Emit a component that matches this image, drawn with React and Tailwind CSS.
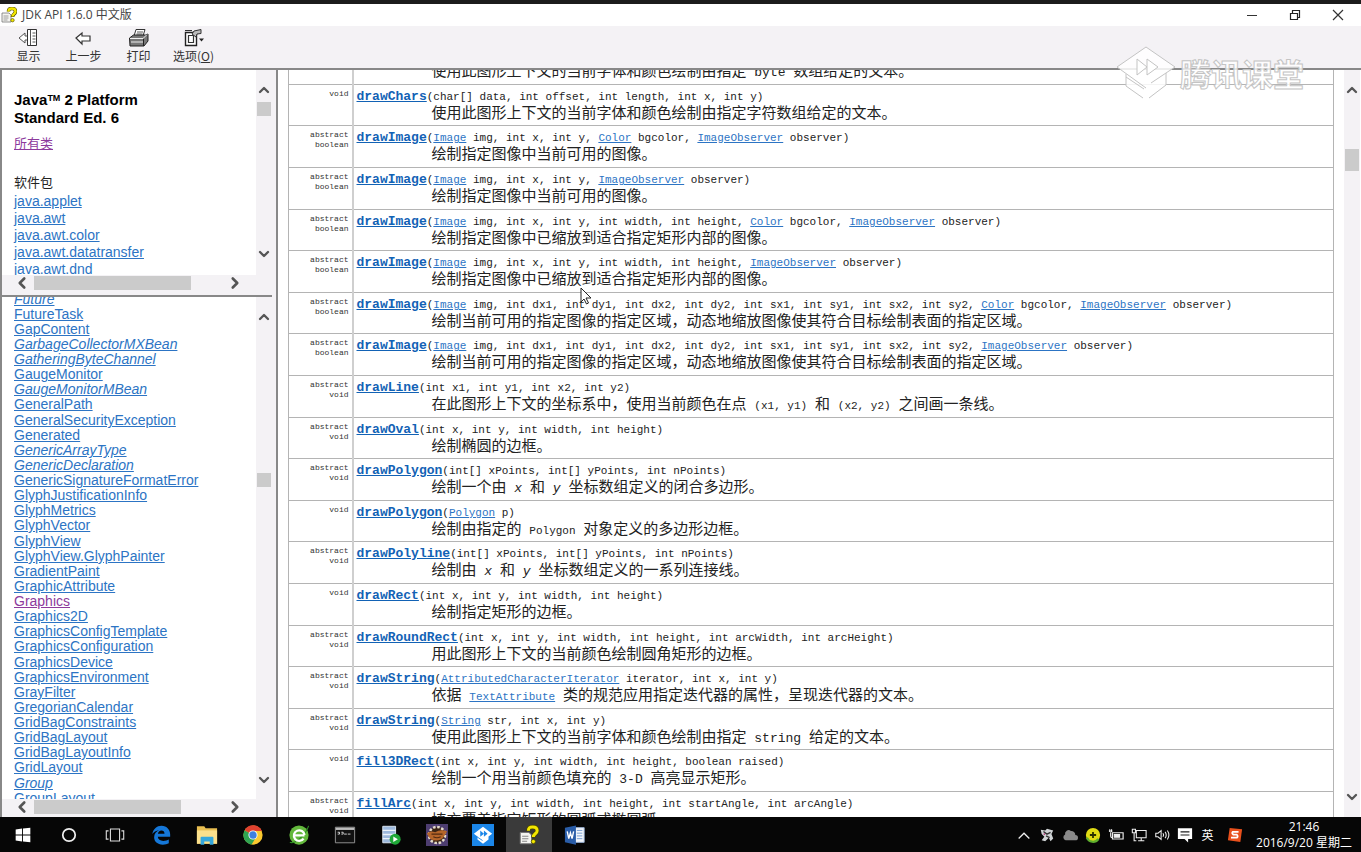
import { Fragment } from "react";
import { ChevronDown, ChevronLeft, ChevronRight, ChevronUp } from "lucide-react";

const packages = ["java.applet", "java.awt", "java.awt.color", "java.awt.datatransfer", "java.awt.dnd"];

// a leading "*" marks an interface, which is listed in italics
const classes = [
  "*Future", "FutureTask", "GapContent", "*GarbageCollectorMXBean", "*GatheringByteChannel", "GaugeMonitor",
  "*GaugeMonitorMBean", "GeneralPath", "GeneralSecurityException", "Generated", "*GenericArrayType",
  "*GenericDeclaration", "GenericSignatureFormatError", "GlyphJustificationInfo", "GlyphMetrics", "GlyphVector",
  "GlyphView", "GlyphView.GlyphPainter", "GradientPaint", "GraphicAttribute", "Graphics", "Graphics2D",
  "GraphicsConfigTemplate", "GraphicsConfiguration", "GraphicsDevice", "GraphicsEnvironment", "GrayFilter",
  "GregorianCalendar", "GridBagConstraints", "GridBagLayout", "GridBagLayoutInfo", "GridLayout", "*Group",
  "GroupLayout",
];

const Mono = ({ children }) => <span className="font-['Liberation_Mono',monospace] text-[13px]">{children}</span>;
const Code = ({ children }) => <code className="font-['Liberation_Mono',monospace] text-[11px]">{children}</code>;
const Link = ({ children }) => (
  <a href="#" className="text-[#2c74c4] underline">
    {children}
  </a>
);

// {Name} inside args becomes a link
const methods = [
  { type: ["abstract", "void"], name: "drawBytes", args: "(byte[] data, int offset, int length, int x, int y)", desc: <>使用此图形上下文的当前字体和颜色绘制由指定<Mono> byte </Mono>数组给定的文本。</> },
  { type: ["void"], name: "drawChars", args: "(char[] data, int offset, int length, int x, int y)", desc: "使用此图形上下文的当前字体和颜色绘制由指定字符数组给定的文本。" },
  { type: ["abstract", "boolean"], name: "drawImage", args: "({Image} img, int x, int y, {Color} bgcolor, {ImageObserver} observer)", desc: "绘制指定图像中当前可用的图像。" },
  { type: ["abstract", "boolean"], name: "drawImage", args: "({Image} img, int x, int y, {ImageObserver} observer)", desc: "绘制指定图像中当前可用的图像。" },
  { type: ["abstract", "boolean"], name: "drawImage", args: "({Image} img, int x, int y, int width, int height, {Color} bgcolor, {ImageObserver} observer)", desc: "绘制指定图像中已缩放到适合指定矩形内部的图像。" },
  { type: ["abstract", "boolean"], name: "drawImage", args: "({Image} img, int x, int y, int width, int height, {ImageObserver} observer)", desc: "绘制指定图像中已缩放到适合指定矩形内部的图像。" },
  { type: ["abstract", "boolean"], name: "drawImage", args: "({Image} img, int dx1, int dy1, int dx2, int dy2, int sx1, int sy1, int sx2, int sy2, {Color} bgcolor, {ImageObserver} observer)", desc: "绘制当前可用的指定图像的指定区域，动态地缩放图像使其符合目标绘制表面的指定区域。" },
  { type: ["abstract", "boolean"], name: "drawImage", args: "({Image} img, int dx1, int dy1, int dx2, int dy2, int sx1, int sy1, int sx2, int sy2, {ImageObserver} observer)", desc: "绘制当前可用的指定图像的指定区域，动态地缩放图像使其符合目标绘制表面的指定区域。" },
  { type: ["abstract", "void"], name: "drawLine", args: "(int x1, int y1, int x2, int y2)", desc: <>在此图形上下文的坐标系中，使用当前颜色在点<Mono> </Mono><Code>(x1, y1)</Code><Mono> </Mono>和<Mono> </Mono><Code>(x2, y2)</Code><Mono> </Mono>之间画一条线。</> },
  { type: ["abstract", "void"], name: "drawOval", args: "(int x, int y, int width, int height)", desc: "绘制椭圆的边框。" },
  { type: ["abstract", "void"], name: "drawPolygon", args: "(int[] xPoints, int[] yPoints, int nPoints)", desc: <>绘制一个由<Mono> <i>x</i> </Mono>和<Mono> <i>y</i> </Mono>坐标数组定义的闭合多边形。</> },
  { type: ["void"], name: "drawPolygon", args: "({Polygon} p)", desc: <>绘制由指定的<Mono> </Mono><Code>Polygon</Code><Mono> </Mono>对象定义的多边形边框。</> },
  { type: ["abstract", "void"], name: "drawPolyline", args: "(int[] xPoints, int[] yPoints, int nPoints)", desc: <>绘制由<Mono> <i>x</i> </Mono>和<Mono> <i>y</i> </Mono>坐标数组定义的一系列连接线。</> },
  { type: ["void"], name: "drawRect", args: "(int x, int y, int width, int height)", desc: "绘制指定矩形的边框。" },
  { type: ["abstract", "void"], name: "drawRoundRect", args: "(int x, int y, int width, int height, int arcWidth, int arcHeight)", desc: "用此图形上下文的当前颜色绘制圆角矩形的边框。" },
  { type: ["abstract", "void"], name: "drawString", args: "({AttributedCharacterIterator} iterator, int x, int y)", desc: <>依据<Mono> </Mono><Code><Link>TextAttribute</Link></Code><Mono> </Mono>类的规范应用指定迭代器的属性，呈现迭代器的文本。</> },
  { type: ["abstract", "void"], name: "drawString", args: "({String} str, int x, int y)", desc: <>使用此图形上下文的当前字体和颜色绘制由指定<Mono> string </Mono>给定的文本。</> },
  { type: ["void"], name: "fill3DRect", args: "(int x, int y, int width, int height, boolean raised)", desc: <>绘制一个用当前颜色填充的<Mono> 3-D </Mono>高亮显示矩形。</> },
  { type: ["abstract", "void"], name: "fillArc", args: "(int x, int y, int width, int height, int startAngle, int arcAngle)", desc: "填充覆盖指定矩形的圆弧或椭圆弧。" },
];

const Signature = ({ args }) =>
  args.split(/\{(\w+)\}/).map((part, i) => <Fragment key={i}>{i % 2 ? <Link>{part}</Link> : part}</Fragment>);

const HelpIcon = ({ className }) => (
  <svg viewBox="0 0 16 16" className={className} aria-hidden="true">
    <path d="M1 6h7l2 2v7H1z" fill="#f4f4f0" stroke="#777" strokeWidth=".8" />
    <path d="M2.5 9h5M2.5 11h5M2.5 13h4" stroke="#888" strokeWidth=".8" />
    <path d="M7.5 4.5C7.5 2 9 1.500 11 1.500s3.500 1 3.500 3c0 2.500-3 2.500-3 5.500" fill="none" stroke="#4a4600" strokeWidth="3.600" />
    <path d="M7.5 4.500C7.500 2 9 1.500 11 1.500s3.500 1 3.500 3c0 2.500-3 2.500-3 5" fill="none" stroke="#f2e600" strokeWidth="2.400" />
    <circle cx="11.500" cy="13.200" r="1.700" fill="#f2e600" stroke="#4a4600" strokeWidth=".6" />
  </svg>
);

const toolbar = [
  {
    label: "显示",
    icon: (
      <>
        <path d="M1 10l6-5v3h3v4H7v3z" fill="#fff" stroke="#555" />
        <path d="M9.500 1.500h9v16h-9z" fill="#fff" stroke="#333" />
        <path d="M12.500 2v15M14.500 5h3M14.500 8h3M14.500 11h3M14.500 14h3" stroke="#555" />
      </>
    ),
  },
  { label: "上一步", icon: <path d="M3 10l6-5v3h8v5H9v3z" fill="#fff" stroke="#333" strokeWidth="1.200" /> },
  {
    label: "打印",
    icon: (
      <>
        <path d="M6 8l2-6.500h9L15 8z" fill="#fff" stroke="#333" />
        <path d="M9 4h6M8.500 6h6" stroke="#555" />
        <path d="M1.500 10l4-3h12l2.500-1v7l-4 5h-14z" fill="#777" stroke="#222" />
        <path d="M2 10.500h13l4-4M3 14h12" fill="none" stroke="#eee" />
        <path d="M15.500 11v7" stroke="#222" />
      </>
    ),
  },
  {
    label: (
      <>
        选项(<u>O</u>)
      </>
    ),
    icon: (
      <>
        <path d="M2.500 4.500h11v13h-11z" fill="#fff" stroke="#222" strokeWidth="1.400" />
        <path d="M5.500 7.500h5v7h-5zM2 2.500h7" fill="none" stroke="#333" strokeWidth="1.200" />
        <path d="M9 6l2-3 7-1.500v4L14 6l-1 3z" fill="#bbb" stroke="#333" />
        <path d="M16 10.500h5l-2.500 3z" fill="#222" />
      </>
    ),
  },
];

const scrollButton = "flex shrink-0 items-center justify-center text-[#555]";

const VScroll = ({ className, thumb }) => (
  <div className={`flex shrink-0 flex-col bg-[#f4f2f5] ${className}`}>
    <button aria-label="向上滚动" className={`${scrollButton} h-4`}>
      <ChevronUp size={18} strokeWidth={3.5} />
    </button>
    <div className={`mx-px bg-[#cbcbcb] ${thumb}`} />
    <button aria-label="向下滚动" className={`${scrollButton} mt-auto h-4`}>
      <ChevronDown size={18} strokeWidth={3.5} />
    </button>
  </div>
);

const HScroll = ({ thumb }) => (
  <div className="flex h-[18px] shrink-0 items-center bg-[#f4f2f5] pr-[11px] pb-0.5 pl-[10px]">
    <button aria-label="向左滚动" className={`${scrollButton} w-5`}>
      <ChevronLeft size={18} strokeWidth={3.5} />
    </button>
    <div className={`ml-0.5 h-[14px] bg-[#cbcbcb] ${thumb}`} />
    <button aria-label="向右滚动" className={`${scrollButton} ml-auto w-5`}>
      <ChevronRight size={18} strokeWidth={3.5} />
    </button>
  </div>
);

const taskbar = [
  { name: "开始", art: <path d="M4 6l7-1v6.500H4zM12 4.900L20 4v7.500h-8zM4 12.500h7V19l-7-1zM12 12.500h8V20l-8-1z" fill="#fff" /> },
  { name: "Cortana", art: <circle cx="12" cy="12" r="6.800" fill="none" stroke="#eee" strokeWidth="1.900" /> },
  { name: "任务视图", art: <path d="M7 5.500h10v13H7zM5 7.500H2.500v9H5M19 7.500h2.500v9H19" fill="none" stroke="#ddd" strokeWidth="1.200" /> },
  {
    name: "Edge",
    art: (
      <path d="M2.500 11C3.500 5.500 7.500 2 12.500 2c6 0 9.500 4.500 9.500 9.500V14H8.500c.2 3 2.500 4.500 6 4.500 2.500 0 4.500-.7 6-1.600V21c-1.700 1-4 1.500-6.500 1.500-6 0-9.500-3.500-9.500-8 0-4 2.500-6.500 5.500-7.700C6.500 7.300 4 8.800 2.500 11zM8.600 10.500h7.200c0-2.200-1.300-3.500-3.300-3.500-2.200 0-3.500 1.500-3.900 3.500z" fill="#1577d8" />
    ),
  },
  {
    name: "文件资源管理器",
    art: (
      <>
        <path d="M1 2.500h8l1.500 2H23v17H1z" fill="#e9bf52" />
        <path d="M1 7h22v14.500H1z" fill="#fbe08c" />
        <path d="M5 22.500V15q0-1 1-1h12q1 0 1 1v7.500h-4V19H9v3.500z" fill="#35a7dc" />
      </>
    ),
  },
  {
    name: "Chrome",
    art: (
      <>
        <circle cx="12" cy="12" r="10.500" fill="#fbc92f" />
        <path d="M12 12L2.900 6.700A10.500 10.500 0 0 0 10.500 22.400L15.500 14z" fill="#30a452" />
        <path d="M12 12L2.900 6.700A10.500 10.500 0 0 1 21.700 7.500H12z" fill="#e0412f" />
        <circle cx="12" cy="12" r="5" fill="#fff" />
        <circle cx="12" cy="12" r="4" fill="#3f7fe0" />
      </>
    ),
  },
  {
    name: "360浏览器",
    art: (
      <>
        <circle cx="12" cy="12" r="10.500" fill="#63b83c" />
        <path d="M2 20C7 22 19 13 22.500 2" fill="none" stroke="#2f8a25" strokeWidth="1.200" />
        <path d="M18 12.500H7M17 16a5.800 5.800 0 1 1 1-4" fill="none" stroke="#fff" strokeWidth="2.500" />
      </>
    ),
  },
  {
    name: "命令提示符",
    art: (
      <>
        <path d="M1.500 3.500h21v17h-21z" fill="#111" stroke="#999" />
        <path d="M2 4h20v2.500H2z" fill="#bbb" />
        <path d="M4 9h2v2H4M8 9h2v2H8M11 11h3M15 11h3" fill="none" stroke="#ddd" />
      </>
    ),
  },
  {
    name: "播放服务",
    art: (
      <>
        <path d="M3 2.500h14v18H3z" fill="#9db9dd" stroke="#dfeaf5" />
        <path d="M3 7h14M3 11.500h14M3 16h14" stroke="#eef4fb" strokeWidth="1.500" />
        <circle cx="16.500" cy="16.500" r="6" fill="#1fa838" />
        <path d="M14.500 13.500l5 3-5 3z" fill="#fff" />
      </>
    ),
  },
  {
    name: "Eclipse",
    art: (
      <>
        <path d="M0 0h24v24H0z" fill="#4d3d70" />
        <circle cx="12" cy="12" r="8.800" fill="#3a2415" stroke="#e5dccb" strokeWidth="2.800" strokeDasharray="2.800 1.800" />
        <path d="M1 10q4-3 9-1 6-4 13-1l-3 5q-3 5-9 5-6 0-8-4z" fill="#b5652a" />
        <path d="M6 11h12M8 14q4 2 8 0" fill="none" stroke="#502a12" strokeWidth="1.300" />
      </>
    ),
  },
  {
    name: "腾讯课堂",
    art: (
      <>
        <path d="M0 0h24v24H0z" fill="#1b86e8" />
        <path d="M12 3l10 7.500-4 3v3.500l-6 4.500L6 17v-3.500l-4-3z" fill="#fff" />
        <path d="M9 7l4 3.500-4 3.500zM13 7l4 3.500-4 3.500z" fill="#1b86e8" />
        <path d="M5.500 14l6 4" stroke="#1b86e8" />
      </>
    ),
  },
  { name: "JDK API", active: true },
  {
    name: "Word",
    art: (
      <>
        <path d="M11 4h11v16H11z" fill="#f2f6fb" stroke="#9fb8dc" />
        <path d="M14 7h6M14 10h6M14 13h6M14 16h6" stroke="#6f97cf" />
        <path d="M1 4l12-2.500v21L1 20z" fill="#2a5da8" />
        <path d="M3.500 8l1.700 8L7 9.500 8.800 16l1.700-8" fill="none" stroke="#fff" strokeWidth="1.500" />
      </>
    ),
  },
];

const tray = [
  <path key="up" d="M3 13l6-6 6 6" fill="none" stroke="#eee" strokeWidth="1.400" />,
  <g key="app">
    <path d="M2 3l5 1 2-2 7 2-2 4 2 5-3 3-2-4-4 4-4-1 3-4-3-3z" fill="#d0d4d6" />
    <path d="M5 5l4 3 4-2M8 10l4 2" stroke="#333" strokeWidth="1.500" fill="none" />
    <circle cx="6" cy="8" r="1" fill="#b33a7a" />
  </g>,
  <path key="cloud" d="M4 15a3.500 3.500 0 0 1-.5-6.500A4 4 0 0 1 10 4.500a4.500 4.500 0 0 1 5 4.500 3 3 0 0 1 0 6z" fill="#8a8a8a" />,
  <g key="guard">
    <circle cx="9" cy="9" r="8" fill="#e0dc14" />
    <path d="M2 12a7.500 7.500 0 0 0 13 1.500" stroke="#5fae2d" strokeWidth="2.500" fill="none" />
    <path d="M9 5.500v7M5.500 9h7" stroke="#283000" strokeWidth="2" />
  </g>,
  <g key="power" fill="none" stroke="#eee" strokeWidth="1.300">
    <path d="M5 6.500h12v7H5zM1 4.500h4M2 2.500v3M4 2.500v3M3 6v4q0 2 2 2" />
    <path d="M7 8.500h6v3H7z" fill="#eee" />
  </g>,
  <path key="net" d="M6 4h11v8H6zM8 15.500h7M11.500 12v3.500M1.500 2.500H5v4H1.500zM3.500 6.500v9H6" fill="none" stroke="#eee" strokeWidth="1.200" />,
  <path key="sound" d="M2 7h2.500L8 4v10l-3.500-3H2zM10 7q1.500 2 0 4M12.500 5.500q2.500 3.500 0 7M15 4q3.500 5 0 10" fill="none" stroke="#eee" strokeWidth="1.200" />,
  <g key="note">
    <path d="M1 1.500h16v12h-4.500v4l-4-4H1z" fill="#fff" />
    <path d="M4 5.500h10M4 9h10" stroke="#222" strokeWidth="1.300" />
  </g>,
];

const TitleBar = () => (
  <header className="flex h-[22px] shrink-0 items-center bg-white">
    <HelpIcon className="ml-px size-4" />
    <h1 className="ml-[5px] font-['Open_Sans','Noto_Sans_CJK_SC',sans-serif] text-[12px] text-[#444]">JDK API 1.6.0 中文版</h1>
    <div className="ml-auto flex pr-0.5">
      <button aria-label="最小化" className="flex h-5 w-[43px] items-center justify-center">
        <svg viewBox="0 0 12 12" className="size-3"><path d="M1 6.500h10" stroke="#333" /></svg>
      </button>
      <button aria-label="还原" className="flex h-5 w-[43px] items-center justify-center">
        <svg viewBox="0 0 12 12" className="size-3"><path d="M1.500 4.500h7v6h-7zM3.500 4V1.500h7v7H9" fill="none" stroke="#222" strokeWidth="1.200" /></svg>
      </button>
      <button aria-label="关闭" className="flex h-5 w-[43px] items-center justify-center">
        <svg viewBox="0 0 12 12" className="size-3"><path d="M1 1l10 10M11 1L1 11" stroke="#333" strokeWidth="1.200" /></svg>
      </button>
    </div>
  </header>
);

const Toolbar = () => (
  <nav className="flex h-[42px] shrink-0 bg-[#f4f2f5] pt-0.5 pl-px">
    {toolbar.map((item, i) => (
      <button key={i} className="flex w-[55px] flex-col items-center text-[12px] leading-4 text-[#333]">
        <svg viewBox="0 0 22 20" className="h-5 w-[22px]">{item.icon}</svg>
        <span className="whitespace-nowrap">{item.label}</span>
      </button>
    ))}
  </nav>
);

const Sidebar = () => (
  <aside className="flex w-[276px] shrink-0 flex-col border-l-2 border-[#888] bg-[#f4f2f5] pr-1 font-['Liberation_Sans','Noto_Sans_CJK_SC',sans-serif] text-[14px]">
    <section className="flex h-[223px] shrink-0">
      <div className="flex min-w-0 flex-1 flex-col">
        <div className="min-h-0 flex-1 overflow-hidden bg-white pt-[21px] pl-3">
          <h2 className="text-[15px] leading-[18px] font-bold text-black">
            Java<sup className="text-[9px]">TM</sup> 2 Platform
            <br />
            Standard Ed. 6
          </h2>
          <p className="mt-2 text-[13px] leading-[18px]">
            <a href="#" className="text-[#8d3a9c] underline">所有类</a>
          </p>
          <h3 className="mt-5 text-[13px] leading-5 text-[#222]">软件包</h3>
          <ul>
            {packages.map((name) => (
              <li key={name} className="leading-[17px]"><Link>{name}</Link></li>
            ))}
          </ul>
        </div>
        <HScroll thumb="w-[157px]" />
      </div>
      <VScroll className="w-4 pt-3 pb-[31px]" thumb="mt-[4px] h-[14px]" />
    </section>
    <section className="mt-[2px] flex min-h-0 flex-1 border-t-2 border-[#888]">
      <div className="flex min-w-0 flex-1 flex-col">
        <div className="min-h-0 flex-1 overflow-hidden bg-white pl-3">
          <ul className="-mt-1.5">
            {classes.map((entry) => {
              const name = entry.replace("*", "");
              return (
                <li key={entry} className="h-[15px] leading-4 nth-[8n]:h-4">
                  <a
                    href="#"
                    className={`underline ${entry[0] === "*" ? "italic" : ""} ${name === "Graphics" ? "text-[#8d3a9c]" : "text-[#2c74c4]"}`}
                  >
                    {name}
                  </a>
                </li>
              );
            })}
          </ul>
        </div>
        <HScroll thumb="w-[147px]" />
      </div>
      <VScroll className="w-4 pt-3 pb-[29px]" thumb="mt-[148px] h-[14px]" />
    </section>
  </aside>
);

const MethodTable = () => (
  <table className="-mt-[28px] w-full border-collapse border border-[#b4b4b4]">
    <tbody>
      {methods.map((m, i) => (
        <tr key={i} className="h-[42px] border-b border-[#b4b4b4] align-top nth-[5n]:h-[41px] nth-[5n+2]:h-[41px]">
          <td className="w-16 border-r-2 border-[#cfcfcf] pt-1 pr-[3px] text-right font-['Liberation_Mono',monospace] text-[8px] leading-[10px] text-[#333]">
            {m.type.map((word) => (
              <div key={word}>{word}</div>
            ))}
          </td>
          <td className="overflow-hidden pt-1 pl-[3px] whitespace-nowrap text-[#222]">
            <div className="flex h-[15px] items-baseline font-['Liberation_Mono',monospace] text-[11px] leading-4">
              <a href="#" className="text-[13px] leading-4 font-bold text-[#1262b5] underline">{m.name}</a>
              <code className="font-['Liberation_Mono',monospace] whitespace-pre"><Signature args={m.args} /></code>
            </div>
            <p className="h-4 pl-[75px] text-[15px] leading-4 whitespace-pre">{m.desc}</p>
          </td>
        </tr>
      ))}
    </tbody>
  </table>
);

const Taskbar = () => (
  <footer className="flex h-[35px] shrink-0 items-stretch bg-[#060606] text-white">
    {taskbar.map((app) => (
      <button
        key={app.name}
        aria-label={app.name}
        className={`flex w-[46px] items-center justify-center ${app.active ? "bg-[#3a3a3a]" : ""}`}
      >
        {app.active ? <HelpIcon className="size-5" /> : <svg viewBox="0 0 24 24" className="size-[22px]">{app.art}</svg>}
      </button>
    ))}
    <div className="ml-auto flex items-center">
      {tray.map((art) => (
        <button key={art.key} className="flex w-[23px] justify-center">
          <svg viewBox="0 0 18 18" className="size-4">{art}</svg>
        </button>
      ))}
      <button className="w-[23px] text-[12px]">英</button>
      <button aria-label="搜狗输入法" className="flex w-8 justify-center">
        <svg viewBox="0 0 18 18" className="size-4">
          <path d="M3 1l14 1.500-2 14.500-14-2z" fill="#e8501c" />
          <path d="M13 5.500H6.500q-1.500 1.500.5 3h4q2 2 0 3.500H4.500" fill="none" stroke="#fff" strokeWidth="2" />
        </svg>
      </button>
      <time className="w-[110px] pr-1 text-center font-['Open_Sans','Noto_Sans_CJK_SC',sans-serif] text-[12px] leading-4 whitespace-nowrap">
        21:46
        <br />
        2016/9/20 星期二
      </time>
    </div>
  </footer>
);

export default function App() {
  return (
    <div lang="zh-CN" className="relative flex h-screen flex-col overflow-hidden bg-white font-['Noto_Sans_CJK_SC',sans-serif]">
      <div className="h-1 shrink-0 bg-[#1c1c1c]" />
      <TitleBar />
      <Toolbar />
      <div className="flex min-h-0 flex-1 border-t-2 border-[#888]">
        <Sidebar />
        <main className="flex min-w-0 flex-1 border-l-2 border-[#888] bg-white">
          <div className="min-w-0 flex-1 overflow-hidden pr-[10px] pl-[10px]">
            <MethodTable />
          </div>
          <VScroll className="mr-px w-4 pt-3 pb-3" thumb="mt-[51px] h-[22px]" />
        </main>
      </div>
      <Taskbar />

      {/* watermark */}
      <div className="pointer-events-none absolute top-[46px] right-[57px] flex items-center gap-1">
        <svg viewBox="0 0 60 54" className="h-[54px] w-[60px]" fill="none" stroke="#c4c4c4">
          <path d="M30 1l29 20-9 6v12L33 52h-6L10 40V27l-9-6z" fill="#fff" fillOpacity=".85" stroke="none" />
          <path d="M30 42L1 21 30 1l29 20-24 16M10 28v12l17 12M50 27v12L33 52M10 31l18 12" />
          <path d="M21 13l10 8-10 8zM31 13l11 8-11 8z" fill="#fff" />
        </svg>
        <span className="text-[31px] leading-9 font-bold text-white/80 [-webkit-text-stroke:1px_#c4c4c4]">腾讯课堂</span>
      </div>

      {/* mouse pointer */}
      <svg viewBox="0 0 12 18" className="pointer-events-none absolute top-[287px] left-[580px] h-[18px] w-3">
        <path d="M1 1v14l3-3 2.500 5 2-1L6 11h5z" fill="#fff" stroke="#222" />
      </svg>
    </div>
  );
}
